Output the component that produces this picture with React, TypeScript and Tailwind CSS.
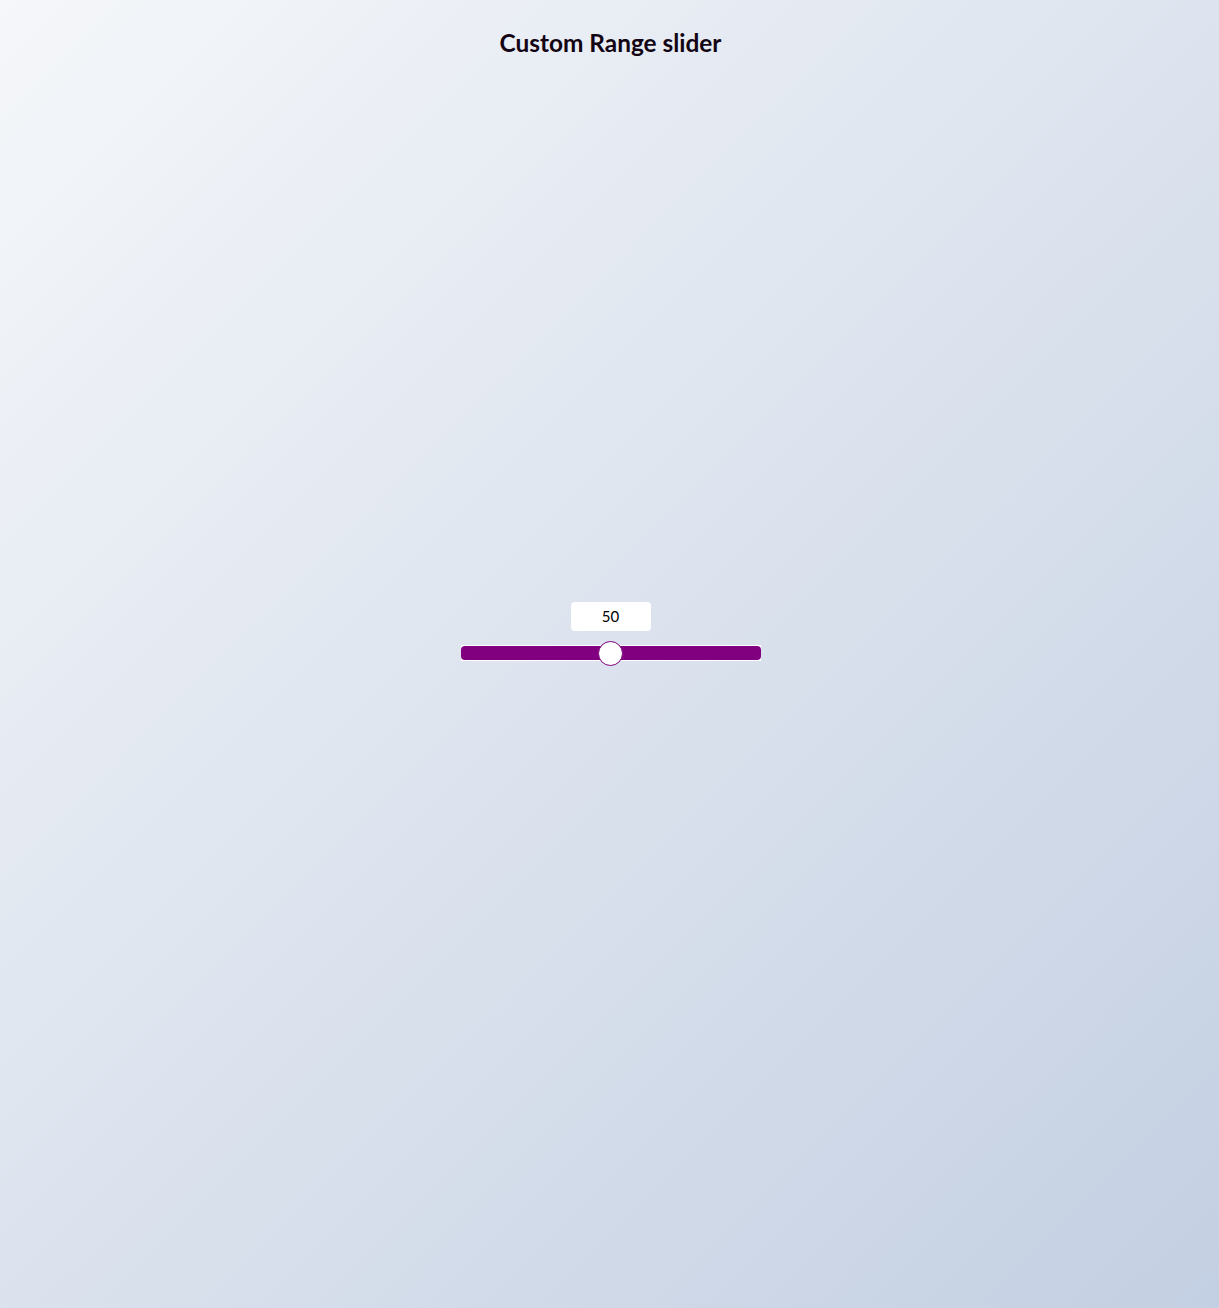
import { useState } from "react";

export default function App() {
  const [value, setValue] = useState(50);

  // thumb center inside the 300px input (thumb is 25px wide)
  const thumbCenter = 12.5 + (275 * value) / 100;

  return (
    <div className="min-h-screen grid grid-rows-[1fr_auto_1fr] bg-[linear-gradient(135deg,#f5f7fa_0%,#c3cfe2_100%)] font-['Lato','Liberation_Sans',sans-serif]">
      <header className="flex justify-center pt-[28px] pl-[2px]">
        <h1 className="text-[24.4px] leading-[1.2] font-bold text-[#140514]">
          Custom Range slider
        </h1>
      </header>

      <div className="flex justify-center pl-[2px] pb-[2px]">
        <div className="relative w-[300px] h-[16px]">
          <div
            className="absolute top-[-43px] w-[80px] h-[29px] flex items-center justify-center bg-white rounded-[4px] text-[15px] text-black"
            style={{ left: thumbCenter - 40 }}
          >
            {value}
          </div>
          <input
            type="range"
            min={0}
            max={100}
            value={value}
            onChange={(e) => setValue(Number(e.target.value))}
            className="block w-[300px] h-[16px] m-0 appearance-none bg-white outline-none cursor-pointer [&::-webkit-slider-runnable-track]:h-[14px] [&::-webkit-slider-runnable-track]:rounded-[4px] [&::-webkit-slider-runnable-track]:bg-[#800080] [&::-webkit-slider-thumb]:appearance-none [&::-webkit-slider-thumb]:w-[25px] [&::-webkit-slider-thumb]:h-[25px] [&::-webkit-slider-thumb]:mt-[-5.5px] [&::-webkit-slider-thumb]:rounded-full [&::-webkit-slider-thumb]:bg-white [&::-webkit-slider-thumb]:border [&::-webkit-slider-thumb]:border-[#800080] [&::-moz-range-track]:h-[14px] [&::-moz-range-track]:rounded-[4px] [&::-moz-range-track]:bg-[#800080] [&::-moz-range-thumb]:w-[23px] [&::-moz-range-thumb]:h-[23px] [&::-moz-range-thumb]:rounded-full [&::-moz-range-thumb]:bg-white [&::-moz-range-thumb]:border [&::-moz-range-thumb]:border-[#800080]"
          />
        </div>
      </div>

      <div />
    </div>
  );
}
